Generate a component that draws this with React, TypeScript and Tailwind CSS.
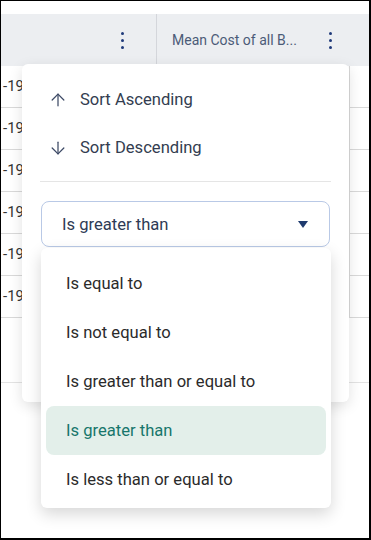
import { ArrowUp, ArrowDown } from 'lucide-react';

const rows = [0, 1, 2, 3, 4, 5];

const options = [
    'Is equal to',
    'Is not equal to',
    'Is greater than or equal to',
    'Is greater than',
    'Is less than or equal to',
];

function Kebab() {
    return (
        <div className="flex flex-col items-center gap-[4px]">
            <span className="block w-[3px] h-[3px] rounded-full bg-[#1f3a7a]"></span>
            <span className="block w-[3px] h-[3px] rounded-full bg-[#1f3a7a]"></span>
            <span className="block w-[3px] h-[3px] rounded-full bg-[#1f3a7a]"></span>
        </div>
    );
}

export default function App() {
    const selected = 'Is greater than';

    return (
        <div className="relative w-[371px] h-[540px] overflow-hidden bg-white border-t border-l border-r-2 border-b-2 border-black font-['Roboto',sans-serif]">
            {/* grid header */}
            <div className="h-[13px]"></div>
            <div className="flex h-[52px] bg-[#eceef1]">
                <div className="w-[156px] flex items-center justify-end pr-[32px] border-r border-[#d4d6db]">
                    <Kebab />
                </div>
                <div className="flex-1 flex items-center justify-between pl-[15px] pr-[37px]">
                    <span className="text-[14px] text-[#4b5b78]">Mean Cost of all B...</span>
                    <Kebab />
                </div>
            </div>

            {/* grid rows */}
            {rows.map((r) => (
                <div key={r} className="flex h-[42px] border-b border-[#d9d9d9]">
                    <div className="flex-1 flex items-center pl-[2px] text-[15px] text-[#333]">-19</div>
                    <div className="w-[15px] border-l border-[#d9d9d9]"></div>
                    <div className="w-[5px]"></div>
                </div>
            ))}
            <div className="h-[65px] border-b border-[#e3e3e3]"></div>

            {/* column menu */}
            <div className="absolute left-[21px] top-[63px] w-[327px] h-[338px] bg-white rounded-[6px] shadow-[0_4px_14px_rgba(0,0,0,0.12)] pt-[12px]">
                <div className="flex items-center h-[48px] pl-[26px] text-[16.6px] text-[#333d50]">
                    <ArrowUp size={20} strokeWidth={1.5} className="text-[#3d4a66]" />
                    <span className="ml-[12px]">Sort Ascending</span>
                </div>
                <div className="flex items-center h-[48px] pl-[26px] text-[16.6px] text-[#333d50]">
                    <ArrowDown size={20} strokeWidth={1.5} className="text-[#3d4a66]" />
                    <span className="ml-[12px]">Sort Descending</span>
                </div>
                <div className="mx-[18px] mt-[9px] border-t border-[#e5e5e5]"></div>
                <div className="mx-[19px] mt-[19px] h-[46px] rounded-[8px] border border-[#b9c9e6] flex items-center justify-between pl-[20px] pr-[21px]">
                    <span className="text-[16.6px] text-[#2e3b55] pt-[3px]">{selected}</span>
                    <svg width="10" height="7" viewBox="0 0 10 7">
                        <path d="M0 0 L10 0 L5 7 Z" fill="#1e3a6e" />
                    </svg>
                </div>
            </div>

            {/* options list */}
            <div className="absolute left-[40px] top-[247px] w-[290px] h-[260px] bg-white rounded-[6px] shadow-[0_6px_16px_rgba(0,0,0,0.16)] pt-[11px] px-[5px]">
                {options.map((o) => (
                    <div
                        key={o}
                        className={
                            o === selected
                                ? 'flex items-center h-[49px] pl-[20px] pt-[2px] rounded-[8px] bg-[#e3efea] text-[16.6px] text-[#17766c]'
                                : 'flex items-center h-[49px] pl-[20px] pt-[2px] text-[16.6px] text-[#2b2b2b]'
                        }
                    >
                        {o}
                    </div>
                ))}
            </div>
        </div>
    );
}
